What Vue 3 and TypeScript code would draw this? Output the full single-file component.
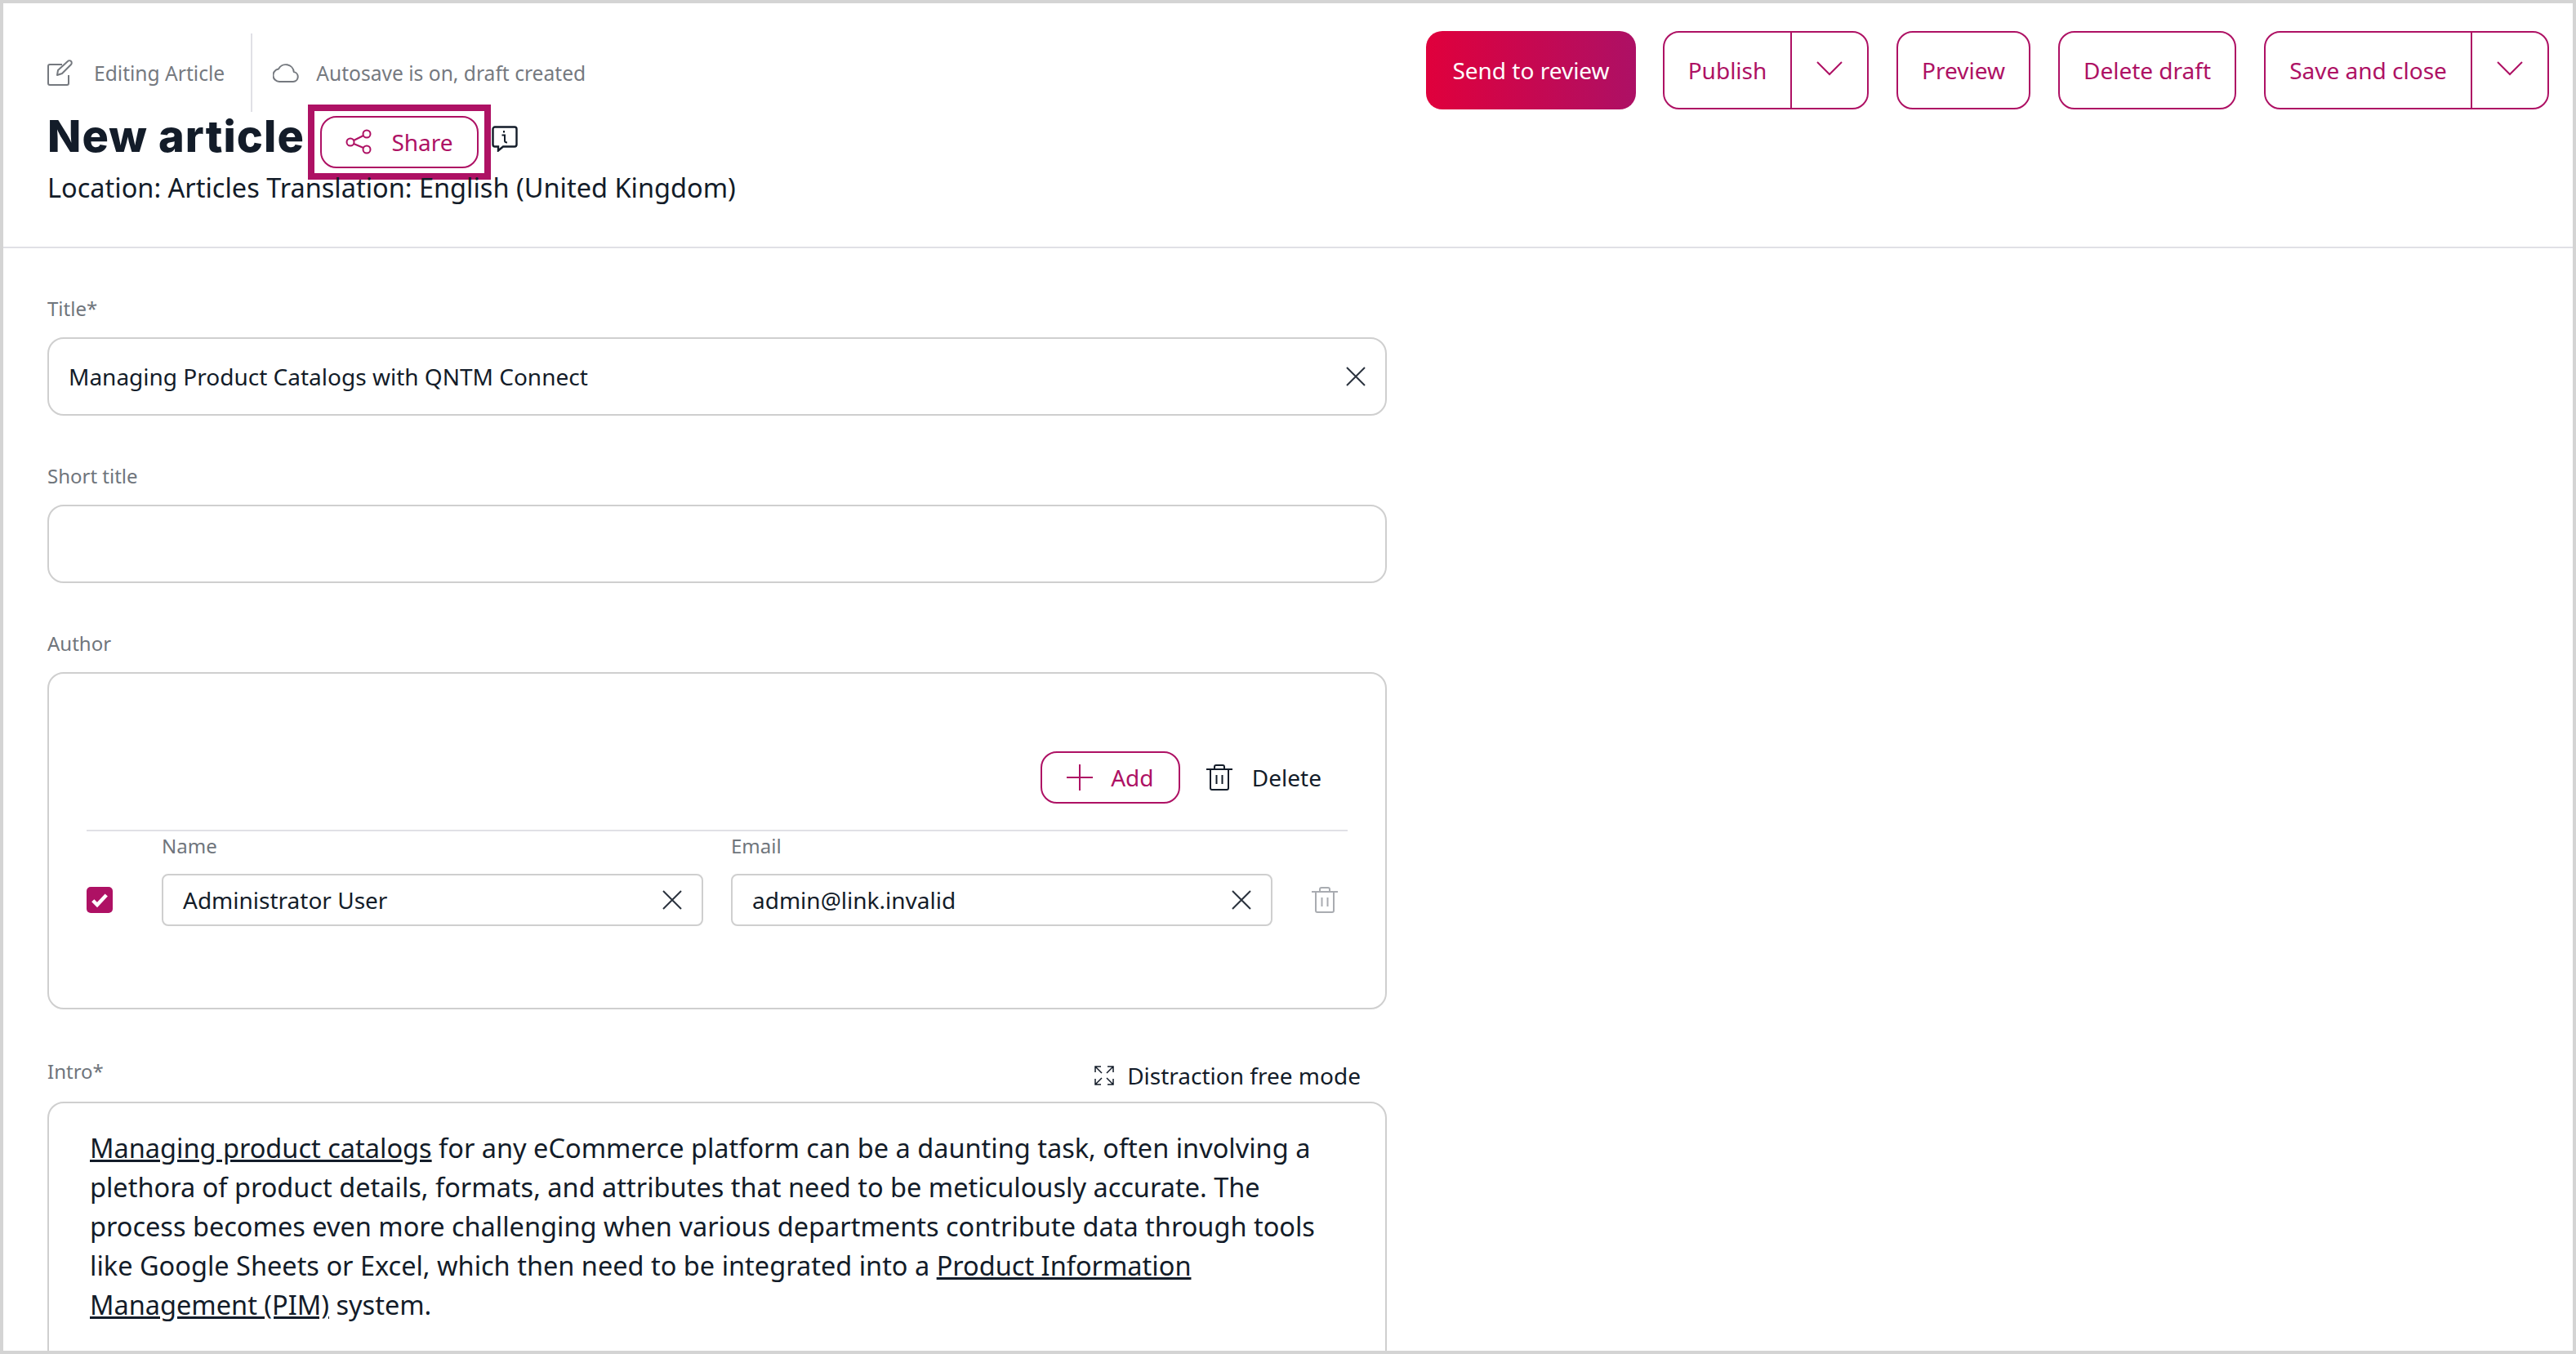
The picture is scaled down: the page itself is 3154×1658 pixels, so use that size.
<script setup lang="ts">
const introNote = 'Editing Article'
</script>

<template>
  <div class="frame">
    <header class="top">
      <div class="top-left">
        <div class="meta">
          <span class="meta-item">
            <svg class="ico-meta" viewBox="0 0 32 32" fill="none" stroke="#75797f" stroke-width="2">
              <path d="M18 6H3a2 2 0 0 0-2 2V29a2 2 0 0 0 2 2H24a2 2 0 0 0 2-2V19"/>
              <path d="M12 19l1-6L25 2c1-1 3-1 4 0s1 3 0 4L18 17z" stroke-linejoin="round"/>
            </svg>
            {{ introNote }}
          </span>
          <span class="meta-sep"></span>
          <span class="meta-item">
            <svg class="ico-cloud" viewBox="0 0 32 24" fill="none">
              <path d="M8 23H25a6 6 0 0 0 .8-11.900A10 10 0 0 0 7 7.500 7.800 7.800 0 0 0 8 23z" stroke="#75797f" stroke-width="2" stroke-linejoin="round"/>
            </svg>
            Autosave is on, draft created
          </span>
        </div>
        <div class="title-row">
          <h1>New article</h1>
          <div class="share-focus">
            <button class="btn share">
              <svg class="ico-share" viewBox="0 0 32 32" fill="none" stroke="#ae1164" stroke-width="2">
                <circle cx="6" cy="16" r="4.500"/><circle cx="26" cy="6" r="4.500"/><circle cx="26" cy="25" r="4.500"/>
                <path d="M10 14l12-6M10 18l12 5"/>
              </svg>
              Share
            </button>
          </div>
          <svg class="ico-info" viewBox="0 0 32 32" fill="none">
            <path d="M4 1.500h24a2.500 2.500 0 0 1 2.500 2.500v19a2.500 2.500 0 0 1-2.500 2.500H14l-6 5v-5H4a2.500 2.500 0 0 1-2.500-2.500V4A2.500 2.500 0 0 1 4 1.500z" stroke="#131c29" stroke-width="2.400"/>
            <path d="M12.500 11.500H16v7c0 1.500 1 2 3 2M15 6v2.500" stroke="#131c29" stroke-width="2"/>
          </svg>
        </div>
        <p class="location">Location: Articles Translation: English (United Kingdom)</p>
      </div>
      <div class="actions">
        <button class="btn primary">Send to review</button>
        <div class="btn split publish">
          <span class="split-main">Publish</span>
          <span class="split-arrow">
            <svg class="ico-chev" viewBox="0 0 32 18" fill="none"><path d="M1 1l15 15L31 1" stroke="#ae1164" stroke-width="2"/></svg>
          </span>
        </div>
        <button class="btn plain preview">Preview</button>
        <button class="btn plain del">Delete draft</button>
        <div class="btn split save">
          <span class="split-main">Save and close</span>
          <span class="split-arrow">
            <svg class="ico-chev" viewBox="0 0 32 18" fill="none"><path d="M1 1l15 15L31 1" stroke="#ae1164" stroke-width="2"/></svg>
          </span>
        </div>
      </div>
    </header>

    <main class="form">
      <section class="field">
        <label>Title*</label>
        <div class="input big">
          <span>Managing Product Catalogs with QNTM Connect</span>
          <svg class="ico-x" viewBox="0 0 24 24" fill="none"><path d="M1 1l22 22M23 1L1 23" stroke="#2b333e" stroke-width="2"/></svg>
        </div>
      </section>

      <section class="field">
        <label>Short title</label>
        <div class="input big"></div>
      </section>

      <section class="field author">
        <label>Author</label>
        <div class="author-box">
          <div class="author-tools">
            <button class="btn add">
              <svg class="ico-plus" viewBox="0 0 32 32" fill="none"><path d="M16 0v32M0 16h32" stroke="#ae1164" stroke-width="2"/></svg>
              Add
            </button>
            <span class="delete">
              <svg class="ico-trash" viewBox="0 0 32 32" fill="none" stroke="#131c29" stroke-width="2">
                <path d="M0 6h32M5 6v23a2 2 0 0 0 2 2h18a2 2 0 0 0 2-2V6M10 6V3a2 2 0 0 1 2-2h8a2 2 0 0 1 2 2v3M12.500 13v11M19.500 13v11"/>
              </svg>
              Delete
            </span>
          </div>
          <div class="author-row">
            <span class="check">
              <svg viewBox="0 0 16 16" fill="none"><path d="M2.500 8.500l3.500 3.500L13.500 4" stroke="#fff" stroke-width="3"/></svg>
            </span>
            <div class="col">
              <label class="small">Name</label>
              <div class="input">
                <span>Administrator User</span>
                <svg class="ico-x" viewBox="0 0 24 24" fill="none"><path d="M1 1l22 22M23 1L1 23" stroke="#2b333e" stroke-width="2"/></svg>
              </div>
            </div>
            <div class="col">
              <label class="small">Email</label>
              <div class="input">
                <span>admin@link.invalid</span>
                <svg class="ico-x" viewBox="0 0 24 24" fill="none"><path d="M1 1l22 22M23 1L1 23" stroke="#2b333e" stroke-width="2"/></svg>
              </div>
            </div>
            <svg class="ico-trash muted" viewBox="0 0 32 32" fill="none" stroke="#a9acb1" stroke-width="2">
              <path d="M0 6h32M5 6v23a2 2 0 0 0 2 2h18a2 2 0 0 0 2-2V6M10 6V3a2 2 0 0 1 2-2h8a2 2 0 0 1 2 2v3M12.500 13v11M19.500 13v11"/>
            </svg>
          </div>
        </div>
      </section>

      <section class="field intro">
        <div class="intro-head">
          <label>Intro*</label>
          <span class="distract">
            <svg class="ico-expand" viewBox="0 0 24 24" fill="none" stroke="#131c29" stroke-width="1.500">
              <path d="M1 8V1h7M1 1l8 8M16 1h7v7M23 1l-8 8M1 16v7h7M1 23l8-8M23 16v7h-7M23 23l-8-8"/>
            </svg>
            Distraction free mode
          </span>
        </div>
        <div class="editor">
          <p>
            <a>Managing product catalogs</a> for any eCommerce platform can be a daunting task, often involving a
            plethora of product details, formats, and attributes that need to be meticulously accurate. The
            process becomes even more challenging when various departments contribute data through tools
            like Google Sheets or Excel, which then need to be integrated into a <a>Product Information</a> <a>Management (PIM)</a> system.
          </p>
        </div>
      </section>
    </main>
  </div>
</template>

<style>
html, body {
  margin: 0;
  background: #fff;
}
</style>

<style scoped>
* {
  box-sizing: border-box;
}

.frame {
  width: 3154px;
  height: 1658px;
  border: 4px solid #d4d4d4;
  overflow: hidden;
  background: #fff;
  color: #131c29;
  font-family: "Noto Sans", sans-serif;
  font-size: 32.5px;
}

/* top bar */
.top {
  display: flex;
  justify-content: space-between;
  height: 300px;
  padding: 37px 29px 0 54px;
  border-bottom: 2px solid #e0e0e6;
}

.meta {
  display: flex;
  align-items: center;
  height: 96px;
  font-size: 24.6px;
  color: #75797f;
}

.meta-item {
  display: flex;
  align-items: center;
}

.meta-sep {
  width: 2px;
  height: 96px;
  margin: 0 25px 0 32px;
  background: #e0e0e6;
}

.ico-meta {
  width: 32px;
  height: 32px;
  margin: 0 25px 0 0;
}

.ico-cloud {
  width: 32px;
  height: 24px;
  margin-right: 21px;
}

.title-row {
  display: flex;
  align-items: flex-start;
  height: 69px;
}

h1 {
  margin: 0 4px 0 0;
  font-family: Inter, sans-serif;
  font-size: 54px;
  letter-spacing: 1.100px;
  line-height: 60px;
  font-weight: 800;
}

.location {
  margin: 0;
  line-height: 48px;
}

.btn {
  display: flex;
  align-items: center;
  justify-content: center;
  border: 2px solid #ae1164;
  border-radius: 20px;
  background: #fff;
  color: #ae1164;
  font-family: inherit;
  font-size: 28px;
}

/* square focus ring around the share button */
.share-focus {
  display: flex;
  align-items: center;
  justify-content: center;
  width: 224px;
  height: 92px;
  margin-top: -9px;
  border: 8px solid #ae1164;
}

.share {
  width: 194px;
  height: 64px;
  gap: 24px;
  padding: 0;
}

.ico-share {
  width: 32px;
  height: 32px;
}

.ico-info {
  width: 32px;
  height: 32px;
  margin: 17px 0 0 1px;
}

.actions {
  display: flex;
  gap: 34px;
  margin-top: -3px;
}

.primary {
  width: 257px;
  height: 96px;
  margin-right: -1px;
  border: 0;
  background: linear-gradient(90deg, #e0003c, #ad1065);
  color: #fff;
}

.plain {
  height: 96px;
  padding: 0;
}

.preview {
  width: 164px;
}

.del {
  width: 218px;
}

.split {
  height: 96px;
}

.publish {
  width: 252px;
}

.save {
  width: 349px;
}

.split-main {
  flex: 1;
  text-align: center;
}

.split-arrow {
  display: flex;
  align-items: center;
  justify-content: center;
  width: 94px;
  height: 100%;
  border-left: 2px solid #ae1164;
}

.ico-chev {
  width: 32px;
  height: 18px;
  margin-bottom: 4px;
}

/* form */
.form {
  padding: 56px 0 0 54px;
  width: 1694px;
}

.field {
  margin-bottom: 56px;
}

.author {
  margin-top: 1px;
}

label {
  display: block;
  height: 36px;
  margin-bottom: 17px;
  font-size: 24px;
  line-height: 36px;
  color: #6f757c;
}

.input {
  display: flex;
  align-items: center;
  justify-content: space-between;
  height: 64px;
  padding: 0 24px;
  border: 2px solid #cfcfcf;
  border-radius: 8px;
  font-size: 28px;
}

.big {
  height: 96px;
  border-radius: 20px;
}

.ico-x {
  width: 24px;
  height: 24px;
}

.author-box {
  height: 413px;
  padding: 95px 46px 0;
  border: 2px solid #cfcfcf;
  border-radius: 20px;
}

.author-tools {
  display: flex;
  justify-content: flex-end;
  align-items: center;
  height: 98px;
  padding: 0 32px 32px 0;
  border-bottom: 2px solid #e0e0e6;
  gap: 32px;
}

.add {
  width: 171px;
  height: 64px;
  gap: 22px;
  padding: 0;
}

.ico-plus {
  width: 32px;
  height: 32px;
}

.delete {
  display: flex;
  align-items: center;
  gap: 24px;
  font-size: 28px;
}

.ico-trash {
  width: 32px;
  height: 32px;
}

.author-row {
  display: flex;
  align-items: flex-end;
}

.check {
  display: flex;
  align-items: center;
  justify-content: center;
  width: 32px;
  height: 32px;
  margin: 0 60px 16px 0;
  border-radius: 5px;
  background: #ae1164;
}

.check svg {
  width: 24px;
  height: 24px;
}

.col {
  width: 663px;
  margin-right: 34px;
}

.small {
  margin-bottom: 16px;
}

.muted {
  margin: 0 0 16px 14px;
}

.intro {
  margin: 58px 0 0;
}

.intro-head {
  display: flex;
  justify-content: space-between;
  align-items: flex-start;
  height: 55px;
}

.distract {
  display: flex;
  align-items: center;
  gap: 16px;
  padding: 4px 32px 0 0;
  font-size: 28px;
}

.ico-expand {
  width: 24px;
  height: 24px;
}

.editor {
  height: 400px;
  padding: 31px 56px 32px 50px;
  border: 2px solid #cfcfcf;
  border-radius: 20px;
}

.editor p {
  margin: 0;
  line-height: 48px;
}

.editor a {
  text-decoration: underline;
}
</style>
